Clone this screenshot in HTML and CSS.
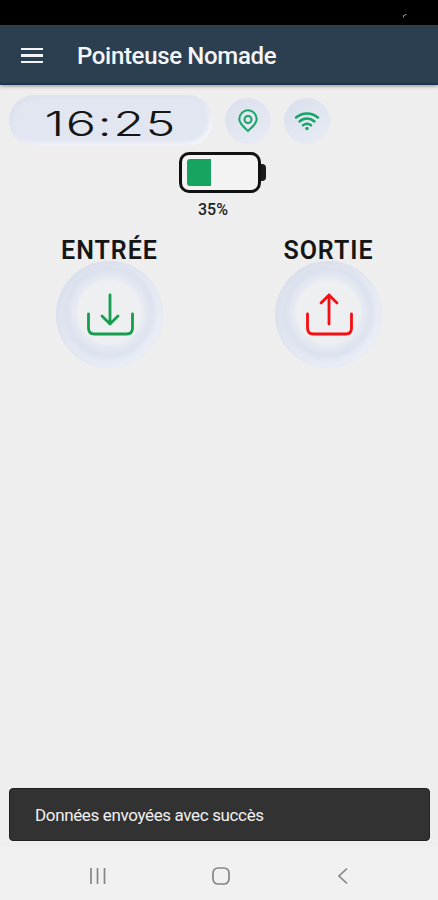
FILE: index.html
```html
<!DOCTYPE html>
<html lang="fr">
<head>
    <meta charset="UTF-8">
    <meta name="viewport" content="width=device-width, initial-scale=1.0">
    <title>Pointeuse Nomade</title>
    <link rel="stylesheet" href="styles.css">
</head>
<body>
    <div class="status-bar">
        <svg width="4" height="4" viewBox="0 0 4 4"><path d="M.5 3.5V1.5L3.5.5" fill="none" stroke="#999"/></svg>
    </div>
    <header class="header">
        <button class="menu" aria-label="Menu"><span></span><span></span><span></span></button>
        <h1>Pointeuse Nomade</h1>
    </header>
    <main>
        <div class="top-row">
            <div class="clock"><span>16:25</span></div>
            <div class="badge">
                <svg width="22" height="24" viewBox="0 0 22 24" fill="none" stroke="#17a567" stroke-width="2">
                    <path d="M11 22C9 19.5 2.3 15.5 2.3 10a8.700 8.700 0 0 1 17.400 0C19.700 15.500 13 19.500 11 22z"/>
                    <circle cx="11" cy="10.500" r="3.500"/>
                </svg>
            </div>
            <div class="badge">
                <svg width="26" height="20" viewBox="0 0 26 20" fill="none" stroke="#17a567" stroke-width="2.500" stroke-linecap="round">
                    <path d="M2 6.500c6.500-5.500 15.500-5.500 22 0M5.500 10.500c4.500-4 10.500-4 15 0M9 14.300c2.500-2 5.500-2 8 0"/>
                    <circle cx="13" cy="17.500" r="1.700" fill="#17a567" stroke="none"/>
                </svg>
            </div>
        </div>
        <div class="battery">
            <div class="battery-body"><div class="battery-level"></div></div>
            <div class="battery-cap"></div>
        </div>
        <p class="percent">35%</p>
        <div class="actions">
            <div class="action">
                <h2>ENTRÉE</h2>
                <button class="round in" aria-label="Entrée">
                    <svg width="50" height="44" viewBox="0 0 50 44">
                        <path d="M25 2v29M17 23l8 8 8-8M3.500 21v14q0 6 6 6h32q6 0 6-6V21"/>
                    </svg>
                </button>
            </div>
            <div class="action">
                <h2>SORTIE</h2>
                <button class="round out" aria-label="Sortie">
                    <svg width="50" height="44" viewBox="0 0 50 44">
                        <path d="M25 31V2M17 10l8-8 8 8M3.500 21v14q0 6 6 6h32q6 0 6-6V21"/>
                    </svg>
                </button>
            </div>
        </div>
    </main>
    <div class="snackbar">Données envoyées avec succès</div>
    <nav class="nav-bar">
        <svg width="18" height="18" viewBox="0 0 18 18"><path d="M2 1v16M8.500 1v16M15.500 1v16"/></svg>
        <svg width="18" height="18" viewBox="0 0 18 18"><rect x="1" y="1" width="16" height="16" rx="5"/></svg>
        <svg width="18" height="18" viewBox="0 0 18 18"><path d="M13 1.500L5 9l8 7.500"/></svg>
    </nav>
</body>
</html>
```
FILE: styles.css
```css
* {
    box-sizing: border-box;
}
body {
    margin: 0;
    height: 100vh;
    display: flex;
    flex-direction: column;
    font-family: Roboto, sans-serif;
    background-color: #eeeeee;
    color: #151515;
    overflow: hidden;
}
h1, h2, p {
    margin: 0;
}
button {
    border: none;
    padding: 0;
    background: none;
}
svg {
    display: block;
}
.status-bar {
    height: 25px;
    padding: 14px 31px 0 0;
    background-color: #000;
    display: flex;
    justify-content: flex-end;
}
.header {
    height: 60px;
    padding: 3px 21px 0;
    display: flex;
    align-items: center;
    background-color: #2c3f50;
    border-bottom: 2px solid #1d3550;
    box-shadow: 0 1px 4px rgba(0, 0, 0, 0.4);
}
.menu {
    width: 22px;
    margin-right: 34px;
    display: flex;
    flex-direction: column;
    gap: 4px;
}
.menu span {
    height: 2.500px;
    background-color: #f2f4f8;
}
.header h1 {
    font-size: 24px;
    font-weight: 500;
    line-height: 30px;
    letter-spacing: -0.330px;
    color: #f5f7fb;
}
main {
    flex-grow: 1;
}
.top-row {
    display: flex;
    align-items: center;
    padding: 10px 0 0 9px;
}
.clock {
    width: 204px;
    height: 51px;
    margin-right: 12px;
    border-radius: 26px;
    display: flex;
    align-items: center;
    justify-content: center;
    background-color: #e2e6f1;
    box-shadow: inset 3px 3px 5px #dde2ec, inset -3px -3px 4px #f3f5fa;
}
.clock span {
    padding-top: 6px;
    font-family: Inter, sans-serif;
    font-size: 34px;
    font-weight: 300;
    line-height: 40px;
    letter-spacing: 1px;
    transform: scaleX(1.480);
}
.badge {
    width: 46px;
    height: 46px;
    margin-right: 13px;
    border-radius: 50%;
    display: flex;
    align-items: center;
    justify-content: center;
    background: linear-gradient(145deg, #d9dfec, #e9ecf4);
}
.battery {
    display: flex;
    align-items: center;
    margin: 6px 0 0 179px;
}
.battery-body {
    width: 82px;
    height: 41px;
    padding: 4px 5px;
    border: 3px solid #111;
    border-radius: 10px;
    background-color: #f2f3f2;
}
.battery-level {
    width: 24px;
    height: 27px;
    border-radius: 3px 0 0 3px;
    background-color: #17a460;
}
.battery-cap {
    width: 5px;
    height: 17px;
    border-radius: 0 4px 4px 0;
    background-color: #1b1b1b;
}
.percent {
    margin-top: 8px;
    width: 426px;
    text-align: center;
    font-size: 16px;
    font-weight: 500;
    line-height: 18px;
    color: #222;
}
.actions {
    display: flex;
    margin-top: 18px;
}
.action {
    width: 219px;
    display: flex;
    flex-direction: column;
    align-items: center;
}
.action h2 {
    font-size: 25px;
    font-weight: 600;
    line-height: 28px;
    letter-spacing: 1px;
}
.round {
    width: 107px;
    height: 107px;
    margin-top: -4px;
    border-radius: 50%;
    display: flex;
    align-items: center;
    justify-content: center;
    background: radial-gradient(circle at 50% 48%, #eeeff1 31px, #e6eaf2 34px, #dce1ee 43px, #e6eaf3 53px);
    box-shadow: inset 3px 3px 7px #d8deeb, inset -6px -5px 8px #eaeef5;
}
.round path {
    fill: none;
    stroke-width: 2.800;
    stroke-linecap: round;
    stroke-linejoin: round;
}
.in path {
    stroke: #169d4e;
}
.out path {
    stroke: #f60e12;
}
.snackbar {
    height: 53px;
    margin: 0 8px 6px 9px;
    padding-left: 25px;
    display: flex;
    align-items: center;
    font-size: 17px;
    letter-spacing: -0.360px;
    color: #f1f1f1;
    background-color: #323232;
    border: 1px solid #202020;
    border-radius: 4px;
}
.nav-bar {
    height: 53px;
    padding: 5px 86px 0 89px;
    display: flex;
    align-items: center;
    justify-content: space-between;
    background-color: #f1f1f1;
}
.nav-bar svg {
    fill: none;
    stroke: #858585;
    stroke-width: 1.700;
}
```
